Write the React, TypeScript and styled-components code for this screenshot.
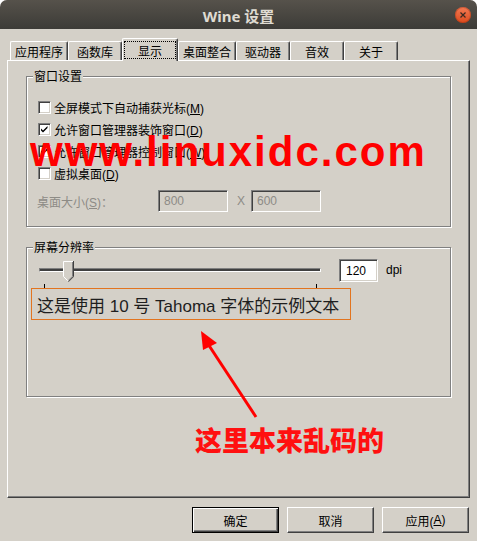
import React from 'react';
import styled, { createGlobalStyle } from 'styled-components';

const FACE = '#d4d0c8';
const SHADOW = '#808080';
const DARK = '#404040';

const GlobalStyle = createGlobalStyle`
  html, body { margin: 0; padding: 0; background: #fff; }
  body {
    font-family: "Liberation Sans", "Noto Sans CJK SC", sans-serif;
    font-size: 12px;
    color: #000;
  }
`;

const Window = styled.div`
  position: relative;
  width: 477px;
  height: 541px;
  background: ${FACE};
  border-radius: 7px 7px 0 0;
  overflow: hidden;
  display: flex;
  flex-direction: column;
`;

const TitleBar = styled.div`
  flex: none;
  height: 29px;
  display: grid;
  grid-template-columns: 1fr auto 1fr;
  align-items: center;
  background: linear-gradient(#56524b, #3c3b37);
  color: #dfdbd2;
  font: bold 15px "Noto Sans", "Noto Sans CJK SC", sans-serif;
`;

const Title = styled.div`
  grid-column: 2;
  padding-top: 1px;
`;

const CloseButton = styled.div`
  justify-self: end;
  margin-right: 6px;
  width: 16px;
  height: 16px;
  border-radius: 50%;
  background: linear-gradient(#f47b55, #dc4a1d);
  box-shadow: inset 0 0 0 1px rgba(150, 40, 10, 0.35);
  display: flex;
  align-items: center;
  justify-content: center;
`;

const Body = styled.div`
  flex: 1;
  display: flex;
  flex-direction: column;
  padding: 9px 7px 0;
`;

const TabStrip = styled.div`
  display: flex;
  align-items: flex-end;
  height: 22px;
  padding-left: 3px;
  position: relative;
  z-index: 1;
`;

const Tab = styled.div<{ $active?: boolean }>`
  box-sizing: border-box;
  display: flex;
  align-items: center;
  height: ${(p) => (p.$active ? 23 : 19)}px;
  margin-bottom: ${(p) => (p.$active ? -1 : 0)}px;
  padding: ${(p) => (p.$active ? '2px 1px 2px' : '0 1px')};
  background: ${FACE};
  border-top: 1px solid #fff;
  border-left: 1px solid #fff;
  border-right: 1px solid ${DARK};
  border-radius: 2px 2px 0 0;
  box-shadow: inset -1px 0 0 ${SHADOW};
`;

const TabLabel = styled.span<{ $active?: boolean }>`
  box-sizing: border-box;
  flex: 1;
  height: 18px;
  min-width: ${(p) => (p.$active ? 52 : 50)}px;
  padding: 0 2px;
  display: flex;
  align-items: center;
  justify-content: center;
  border: 1px ${(p) => (p.$active ? 'dotted #000' : 'solid transparent')};
`;

const Panel = styled.div`
  box-sizing: border-box;
  height: 438px;
  padding: 15px 18px 0;
  display: flex;
  flex-direction: column;
  gap: 20px;
  border-top: 1px solid #fff;
  border-left: 1px solid #fff;
  border-right: 1px solid ${DARK};
  border-bottom: 1px solid ${DARK};
  box-shadow: inset -1px -1px 0 ${SHADOW};
`;

const Group = styled.div<{ $height: number }>`
  position: relative;
  box-sizing: border-box;
  width: 425px;
  height: ${(p) => p.$height}px;
  border: 1px solid ${SHADOW};
  box-shadow: inset 1px 1px 0 #fff, 1px 1px 0 #fff;
`;

const GroupTitle = styled.span`
  position: absolute;
  left: 6px;
  top: -8px;
  padding: 0 1px;
  line-height: 16px;
  background: ${FACE};
`;

const GroupInner = styled.div<{ $pt: number; $pl: number }>`
  display: flex;
  flex-direction: column;
  padding: ${(p) => p.$pt}px 0 0 ${(p) => p.$pl}px;
`;

const CheckRow = styled.label`
  display: flex;
  align-items: center;
  height: 22px;
  gap: 3px;
`;

const CheckBox = styled.span`
  box-sizing: border-box;
  flex: none;
  width: 13px;
  height: 13px;
  background: #fff;
  border-top: 1px solid ${SHADOW};
  border-left: 1px solid ${SHADOW};
  border-bottom: 1px solid #fff;
  border-right: 1px solid #fff;
  box-shadow: inset 1px 1px 0 ${DARK}, inset -1px -1px 0 ${FACE};
  display: flex;
`;

const U = styled.span`
  text-decoration: underline;
`;

const SizeRow = styled.div`
  display: flex;
  align-items: center;
  margin: 6px 0 0 -1px;
  color: #8d8b86;
`;

const SizeLabel = styled.span`
  width: 121px;
`;

const Field = styled.div<{ $w: number; $h: number; $disabled?: boolean }>`
  box-sizing: border-box;
  width: ${(p) => p.$w}px;
  height: ${(p) => p.$h}px;
  display: flex;
  align-items: center;
  padding-left: 5px;
  background: ${(p) => (p.$disabled ? FACE : '#fff')};
  color: ${(p) => (p.$disabled ? '#8d8b86' : '#000')};
  border-top: 1px solid ${SHADOW};
  border-left: 1px solid ${SHADOW};
  border-bottom: 1px solid #fff;
  border-right: 1px solid #fff;
  box-shadow: inset 1px 1px 0 ${DARK}, inset -1px -1px 0 ${FACE};
`;

const Times = styled.span`
  margin: 0 6px 0 9px;
`;

const SliderRow = styled.div`
  display: flex;
  align-items: flex-start;
  padding-left: 8px;
`;

const Slider = styled.div`
  position: relative;
  box-sizing: border-box;
  width: 290px;
  height: 29px;
  padding: 9px 4px 0;
`;

const Track = styled.div`
  height: 4px;
  box-sizing: border-box;
  border-top: 1px solid ${SHADOW};
  border-left: 1px solid ${SHADOW};
  border-bottom: 1px solid #fff;
  border-right: 1px solid #fff;
  background: ${DARK};
`;

const Thumb = styled.svg`
  position: absolute;
  left: 28px;
  top: 2px;
`;

const Tick = styled.span<{ $x: number }>`
  position: absolute;
  left: ${(p) => p.$x}px;
  top: 25px;
  width: 1px;
  height: 4px;
  background: #000;
`;

const DpiField = styled(Field)`
  margin-left: 14px;
  padding-left: 6px;
`;

const Unit = styled.span`
  margin-left: 8px;
  line-height: 23px;
`;

const Sample = styled.div`
  box-sizing: border-box;
  width: 320px;
  height: 32px;
  margin-left: 4px;
  padding: 0 5px;
  display: flex;
  align-items: center;
  border: 1px solid #e2741f;
  font-size: 17px;
  color: #1e1e1e;
  white-space: nowrap;
`;

const ButtonBar = styled.div`
  display: flex;
  justify-content: flex-end;
  gap: 8px;
  margin-top: 9px;
  padding-right: 1px;
`;

const Button = styled.div<{ $default?: boolean }>`
  box-sizing: border-box;
  width: 87px;
  height: 26px;
  display: flex;
  align-items: center;
  justify-content: center;
  background: ${FACE};
  border: 1px solid ${(p) => (p.$default ? '#000' : 'transparent')};
  border-top-color: ${(p) => (p.$default ? '#000' : '#fff')};
  border-left-color: ${(p) => (p.$default ? '#000' : '#fff')};
  border-right-color: ${(p) => (p.$default ? '#000' : DARK)};
  border-bottom-color: ${(p) => (p.$default ? '#000' : DARK)};
  box-shadow: ${(p) =>
    p.$default
      ? `inset 1px 1px 0 #fff, inset -1px -1px 0 ${DARK}, inset -2px -2px 0 ${SHADOW}`
      : `inset -1px -1px 0 ${SHADOW}`};
`;

/* annotations drawn over the dialog */
const Watermark = styled.div`
  position: absolute;
  left: 30px;
  top: 131px;
  font: bold 42px/42px "Liberation Sans", sans-serif;
  letter-spacing: 2px;
  color: #ff0000;
  white-space: nowrap;
`;

const Arrow = styled.svg`
  position: absolute;
  left: 190px;
  top: 325px;
`;

const Note = styled.div`
  position: absolute;
  left: 195px;
  top: 426px;
  font: 900 27px/27px "Noto Sans CJK SC", sans-serif;
  color: #ff1010;
  white-space: nowrap;
`;

const tabs = ['应用程序', '函数库', '显示', '桌面整合', '驱动器', '音效', '关于'];

const options = [
  { text: '全屏模式下自动捕获光标', key: 'M', checked: false },
  { text: '允许窗口管理器装饰窗口', key: 'D', checked: true },
  { text: '允许窗口管理器控制窗口', key: 'W', checked: true },
  { text: '虚拟桌面', key: 'D', checked: false },
];

const Check = () => (
  <svg width="11" height="11" viewBox="0 0 11 11">
    <path d="M2 4.5 L4 6.5 L8.5 2 V4 L4 8.5 L2 6.5 Z" fill="#000" />
  </svg>
);

export default function App() {
  return (
    <Window>
      <GlobalStyle />
      <TitleBar>
        <Title>Wine 设置</Title>
        <CloseButton>
          <svg width="8" height="8" viewBox="0 0 8 8">
            <path d="M1.5 1.5 L6.5 6.5 M6.5 1.5 L1.5 6.5" stroke="#3a2a22" strokeWidth="1.2" />
          </svg>
        </CloseButton>
      </TitleBar>
      <Body>
        <TabStrip>
          {tabs.map((t) => (
            <Tab key={t} $active={t === '显示'}>
              <TabLabel $active={t === '显示'}>{t}</TabLabel>
            </Tab>
          ))}
        </TabStrip>
        <Panel>
          <Group $height={151}>
            <GroupTitle>窗口设置</GroupTitle>
            <GroupInner $pt={19} $pl={11}>
              {options.map((o) => (
                <CheckRow key={o.text}>
                  <CheckBox>{o.checked && <Check />}</CheckBox>
                  <span>
                    {o.text}(<U>{o.key}</U>)
                  </span>
                </CheckRow>
              ))}
              <SizeRow>
                <SizeLabel>
                  桌面大小(<U>S</U>)：
                </SizeLabel>
                <Field $w={70} $h={22} $disabled>800</Field>
                <Times>X</Times>
                <Field $w={70} $h={22} $disabled>600</Field>
              </SizeRow>
            </GroupInner>
          </Group>
          <Group $height={150}>
            <GroupTitle>屏幕分辨率</GroupTitle>
            <GroupInner $pt={11} $pl={0}>
              <SliderRow>
                <Slider>
                  <Track />
                  <Thumb width="11" height="21" viewBox="0 0 11 21">
                    <path d="M0 0 H11 V15.5 L5.5 21 L0 15.5 Z" fill={FACE} />
                    <path d="M0.5 15.5 V0.5 H10" stroke="#fff" fill="none" />
                    <path d="M0.5 15.5 L5 20" stroke="#fff" fill="none" />
                    <path d="M9.5 1 V15.3 L5.3 19.5" stroke={SHADOW} fill="none" />
                    <path d="M10.5 0 V15.7 L5.5 20.7" stroke={DARK} fill="none" />
                  </Thumb>
                  <Tick $x={9} />
                  <Tick $x={281} />
                </Slider>
                <DpiField $w={39} $h={23}>120</DpiField>
                <Unit>dpi</Unit>
              </SliderRow>
              <Sample>这是使用 10 号 Tahoma 字体的示例文本</Sample>
            </GroupInner>
          </Group>
        </Panel>
        <ButtonBar>
          <Button $default>确定</Button>
          <Button>取消</Button>
          <Button>
            应用(<U>A</U>)
          </Button>
        </ButtonBar>
      </Body>

      <Watermark>www.linuxidc.com</Watermark>
      <Arrow width="75" height="100" viewBox="0 0 75 100">
        <line x1="66" y1="92" x2="18" y2="19" stroke="#ff0000" strokeWidth="3" />
        <polygon points="11,6 27,18 13,25" fill="#ff0000" />
      </Arrow>
      <Note>这里本来乱码的</Note>
    </Window>
  );
}
